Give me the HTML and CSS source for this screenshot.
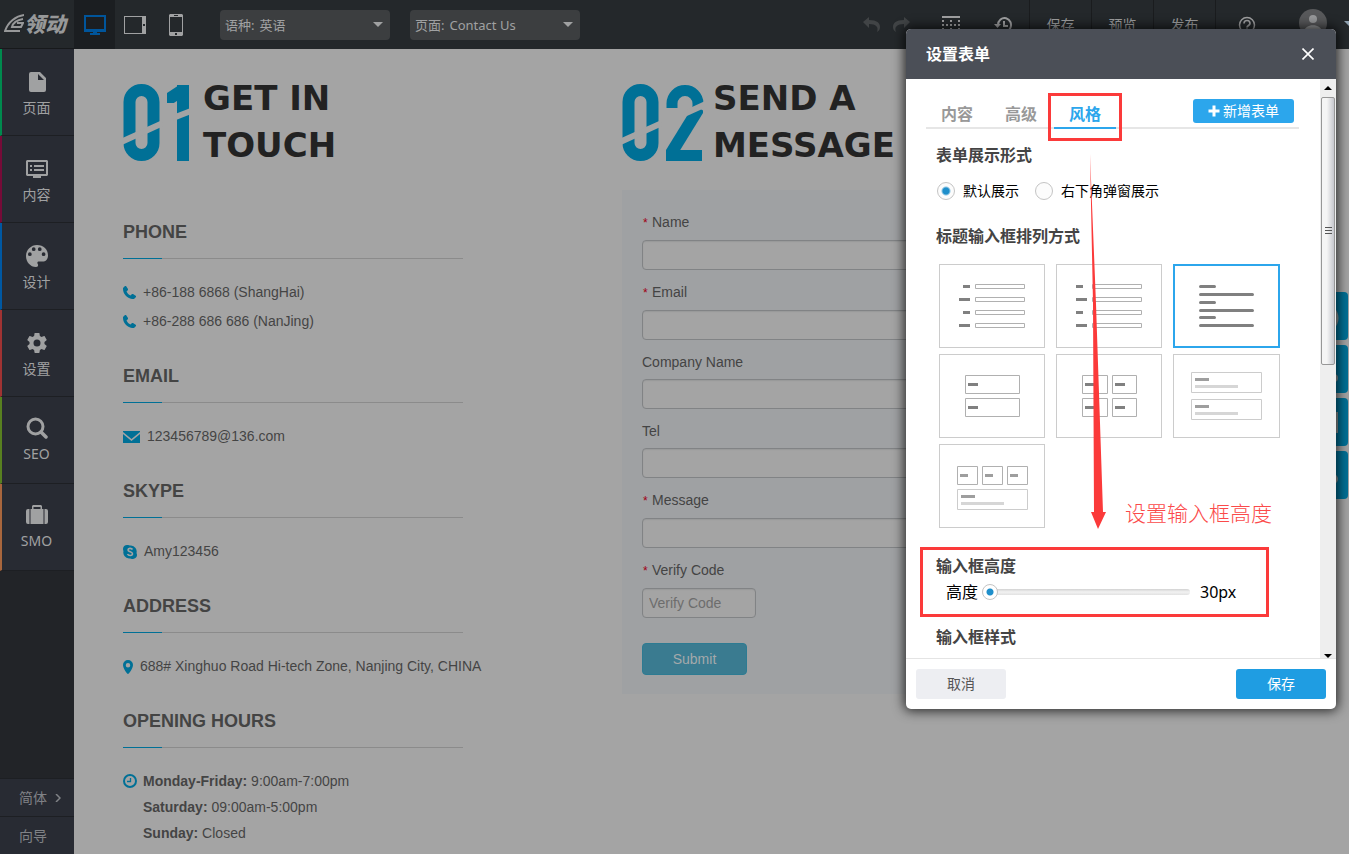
FILE: index.html
```html
<!DOCTYPE html>
<html lang="zh-CN">
<head>
<meta charset="utf-8">
<title>设置表单</title>
<link rel="stylesheet" href="styles.css">
</head>
<body>
<header class="topbar">
  <a class="logo" href="#" aria-label="领动">
    <svg width="20" height="22" viewBox="0 0 20 22"><path d="M20 3C12 4 4 10 1 19h15M19 7c-6 1-10 4-11 8h9l2-4h-6" fill="none" stroke="currentColor" stroke-width="2"/></svg>
    <span>领动</span>
  </a>
  <nav class="devices">
    <button class="device device-on" aria-label="desktop"><svg width="22" height="20" viewBox="0 0 22 20" fill="currentColor"><path fill-rule="evenodd" d="M0 0h22v17H0zM2 2v12h18V2zM9 17h4v1h3v2H6v-2h3z"/></svg></button>
    <button class="device" aria-label="tablet"><svg width="22" height="18" viewBox="0 0 22 18" fill="currentColor"><path fill-rule="evenodd" d="M0 0h22v18H0zM1 1v16h17V1zM19 8v2h2V8z"/></svg></button>
    <button class="device" aria-label="phone"><svg width="14" height="22" viewBox="0 0 14 22" fill="currentColor"><path fill-rule="evenodd" d="M1 0h12l1 1v20l-1 1H1l-1-1V1zM1 3v15h12V3zM5 1v1h4V1zM6 19v2h2v-2z"/></svg></button>
  </nav>
  <label class="picker">语种:
    <select><option>英语</option></select>
  </label>
  <label class="picker">页面:
    <select><option>Contact Us</option></select>
  </label>
  <div class="tools">
    <button class="tool tool-dim" aria-label="undo"><svg width="17" height="15" viewBox="0 0 17 15" fill="currentColor"><path d="M6 0v3c8 0 11 3 11 7 0 2-1 4-3 5 2-5-1-8-8-8v4L0 5z"/></svg></button>
    <button class="tool tool-dim" aria-label="redo"><svg width="17" height="15" viewBox="0 0 17 15" fill="currentColor"><path d="M11 0v3C3 3 0 6 0 10c0 2 1 4 3 5-2-5 1-8 8-8v4l6-6z"/></svg></button>
    <button class="tool tool-wide tool-first" aria-label="grid"><svg width="18" height="18" viewBox="0 0 18 18" stroke="currentColor" stroke-width="2" fill="none"><path d="M0 1h18"/><path stroke-dasharray="2 2" d="M0 9h18"/><path stroke-dasharray="2 6" d="M0 5h18M0 13h18"/><path stroke-dasharray="2 2" d="M0 17h18"/></svg></button>
    <button class="tool tool-wide" aria-label="history"><svg width="18" height="18" viewBox="0 0 18 18" stroke="currentColor" stroke-width="2" fill="none"><path d="M4 9a6.500 7 0 1 1 2 5M10 5v5h4"/><path d="M0 8h7l-3.500 4z" fill="currentColor" stroke="none"/></svg></button>
    <button class="tool tool-text">保存</button>
    <button class="tool tool-text">预览</button>
    <button class="tool tool-text">发布</button>
    <button class="tool tool-text" aria-label="help"><svg width="18" height="18" viewBox="0 0 18 18" stroke="currentColor" stroke-width="2" fill="none"><circle cx="9" cy="9" r="7.500" stroke-width="1.500"/><path stroke-width="1.700" d="M6 7.500c0-4 6-4 6 0 0 2-3 2-3 4M9 12.500v2"/></svg></button>
    <button class="account" aria-label="account"><svg width="28" height="28" viewBox="0 0 28 28"><circle cx="14" cy="14" r="14" fill="#58595b"/><circle cx="14" cy="10" r="4" fill="#97989a"/><path d="M5 23c0-9 18-9 18 0a14 14 0 0 1-18 0z" fill="#97989a"/></svg><svg width="10" height="5" viewBox="0 0 10 5"><path d="M0 0h10L5 5z" fill="#8fa1b0"/></svg></button>
  </div>
</header>

<div class="workspace">
  <nav class="sidebar">
    <a class="side side-green" href="#"><svg width="22" height="22" viewBox="0 0 22 22" fill="currentColor"><path fill-rule="evenodd" d="M5 1h9l6 6v12a2 2 0 0 1-2 2H5a2 2 0 0 1-2-2V3a2 2 0 0 1 2-2zm7 2v6h6z"/></svg>页面</a>
    <a class="side side-pink" href="#"><svg width="22" height="22" viewBox="0 0 22 22" fill="currentColor"><path fill-rule="evenodd" d="M1 2h20l1 1v14l-1 1h-6v2H7v-2H1l-1-1V3zM2 4v12h18V4zM4 7h2v2H4zM8 7h10v2H8zM4 11h2v2H4zM8 11h10v2H8z"/></svg>内容</a>
    <a class="side side-blue" href="#"><svg width="22" height="22" viewBox="2 2 20 20" fill="currentColor"><path d="M12 2C6.500 2 2 6.500 2 12s4 10 9 10c2 0 2-1 2-2-1-2-1-3 1-3h3c3 0 5-2 5-5.500C22 6 18 2 12 2zM5.500 12a1.700 1.700 0 1 1 0-3.400 1.700 1.700 0 0 1 0 3.400zm3.500-4.500a1.700 1.700 0 1 1 0-3.400 1.700 1.700 0 0 1 0 3.400zm5.500 0a1.700 1.700 0 1 1 0-3.400 1.700 1.700 0 0 1 0 3.400zM18 12a1.700 1.700 0 1 1 0-3.400 1.700 1.700 0 0 1 0 3.400z" fill-rule="evenodd"/></svg>设计</a>
    <a class="side side-red" href="#"><svg width="22" height="22" viewBox="1 1 22 22" fill="currentColor"><path d="M19.430 12.980c.04-.32.07-.64.07-.98s-.03-.66-.07-.98l2.110-1.650c.19-.15.24-.42.12-.64l-2-3.460c-.12-.22-.39-.3-.61-.22l-2.490 1c-.52-.4-1.080-.73-1.690-.98l-.38-2.650C14.460 2.180 14.250 2 14 2h-4c-.25 0-.46.18-.49.42l-.38 2.650c-.61.25-1.170.59-1.690.98l-2.490-1c-.23-.09-.49 0-.61.22l-2 3.460c-.13.22-.07.49.12.64l2.110 1.650c-.04.32-.07.65-.07.98s.03.66.07.98l-2.110 1.650c-.19.15-.24.42-.12.64l2 3.460c.12.22.39.3.61.22l2.490-1c.52.4 1.080.73 1.690.98l.38 2.650c.03.24.24.42.49.42h4c.25 0 .46-.18.49-.42l.38-2.650c.61-.25 1.170-.59 1.690-.98l2.490 1c.23.09.49 0 .61-.22l2-3.460c.12-.22.07-.49-.12-.64l-2.110-1.650zM12 15.500a3.500 3.500 0 1 1 0-7 3.500 3.500 0 0 1 0 7z"/></svg>设置</a>
    <a class="side side-latin side-lime" href="#"><svg width="22" height="22" viewBox="0 0 22 22" fill="none" stroke="currentColor"><circle cx="9.500" cy="9.500" r="7.500" stroke-width="3"/><path d="M15 15l5 5" stroke-width="3.500" stroke-linecap="round"/></svg>SEO</a>
    <a class="side side-latin side-orange" href="#"><svg width="22" height="22" viewBox="0 0 22 22" fill="currentColor"><path d="M2 5h1.500v15H2a2 2 0 0 1-2-2V7a2 2 0 0 1 2-2zM18.500 5H20a2 2 0 0 1 2 2v11a2 2 0 0 1-2 2h-1.500zM4.500 5H6V2l1-1h8l1 1v3h1.500v15h-13zm3-2v2h7V3z" fill-rule="evenodd"/></svg>SMO</a>
    <div class="side-foot">
      <a class="side-small" href="#">简体 <svg width="6" height="8" viewBox="0 0 6 8"><path d="M1 0l4 4-4 4" fill="none" stroke="currentColor" stroke-width="1.500"/></svg></a>
      <a class="side-small" href="#">向导</a>
    </div>
  </nav>

  <main class="page">
    <section class="contact">
      <div class="title">
        <svg class="numeral" width="67" height="77" viewBox="0 0 67 77" role="img" aria-label="01">
          <defs><clipPath id="flag"><rect x="44" y="1" width="22" height="18"/></clipPath></defs>
          <rect x="6.500" y="6" width="24" height="65" rx="12" fill="none" stroke="#007096" stroke-width="12"/>
          <rect x="54" y="1" width="12" height="76" fill="#007096"/>
          <line x1="40" y1="19" x2="64" y2="3" stroke="#007096" stroke-width="12" clip-path="url(#flag)"/>
          <line x1="-2" y1="58" x2="40" y2="39" stroke="#a4a4a4" stroke-width="6"/><line x1="50" y1="34" x2="68" y2="27" stroke="#a4a4a4" stroke-width="6"/>
        </svg>
        <h2>GET IN<br>TOUCH</h2>
      </div>
      <h3>PHONE</h3>
      <p><svg width="13" height="13" viewBox="0 0 13 13"><path d="M2 0h1l2 3v1L3.500 5.500c1 2 2 3 4 4L9 8h1l3 2v1l-2 2H9C4 12 0 8 0 3V2z"/></svg>+86-188 6868 (ShangHai)</p>
      <p><svg width="13" height="13" viewBox="0 0 13 13"><path d="M2 0h1l2 3v1L3.500 5.500c1 2 2 3 4 4L9 8h1l3 2v1l-2 2H9C4 12 0 8 0 3V2z"/></svg>+86-288 686 686 (NanJing)</p>
      <h3>EMAIL</h3>
      <p><svg width="17" height="12" viewBox="0 0 17 12"><path d="M0 0h17v1L8.500 8 0 1zM0 3l8.500 7L17 3v9H0z"/></svg>123456789@136.com</p>
      <h3>SKYPE</h3>
      <p><svg width="14" height="14" viewBox="0 0 14 14"><path d="M4 0c2 0 2 .5 4 .5A6 6 0 0 1 13.500 8C15 11 13 14 10 14c-2 0-2-.5-4-.5A6 6 0 0 1 .5 6C-1 3 1 0 4 0z"/><path d="M9.500 4.500C8.500 2.800 5 3 5 5c0 2.200 4.500 1.500 4.500 3.800 0 2.200-4 2.200-5 .2" fill="none" stroke="#a4a4a4" stroke-width="1.600"/></svg>Amy123456</p>
      <h3>ADDRESS</h3>
      <p><svg width="10" height="14" viewBox="0 0 10 14"><path fill-rule="evenodd" d="M5 0a5 5 0 0 1 5 5c0 3-4 9-5 9S0 8 0 5a5 5 0 0 1 5-5zm0 3a2 2 0 1 0 0 4.500A2 2 0 0 0 5 3z"/></svg>688# Xinghuo Road Hi-tech Zone, Nanjing City, CHINA</p>
      <h3>OPENING HOURS</h3>
      <div class="schedule">
        <p class="hours"><svg width="14" height="14" viewBox="0 0 14 14"><path d="M7 1a6 6 0 1 0 0 12A6 6 0 0 0 7 1z" fill="none" stroke="#007096" stroke-width="2"/><path d="M7.500 4v3.500H4" fill="none" stroke="#007096" stroke-width="1.300"/></svg><b>Monday-Friday:</b>&nbsp;9:00am-7:00pm</p>
        <p class="hours hours-more"><b>Saturday:</b>&nbsp;09:00am-5:00pm</p>
        <p class="hours hours-more"><b>Sunday:</b>&nbsp;Closed</p>
      </div>
    </section>

    <section class="message">
      <div class="title title-near">
        <svg class="numeral" width="82" height="77" viewBox="0 0 82 77" role="img" aria-label="02">
          <defs><clipPath id="top"><rect x="44" y="0" width="38" height="24"/></clipPath><clipPath id="low"><rect x="44" y="20" width="37" height="57"/></clipPath></defs>
          <rect x="6.500" y="6" width="24" height="65" rx="12" fill="none" stroke="#007096" stroke-width="12"/>
          <rect x="50" y="6.500" width="26" height="50" rx="13" fill="none" stroke="#007096" stroke-width="11" clip-path="url(#top)"/>
          <line x1="77" y1="24" x2="48" y2="71" stroke="#007096" stroke-width="12" clip-path="url(#low)"/>
          <rect x="44" y="66" width="36" height="11" fill="#007096"/>
          <line x1="-2" y1="58" x2="40" y2="39" stroke="#a4a4a4" stroke-width="6"/><line x1="62" y1="30" x2="86" y2="19" stroke="#a4a4a4" stroke-width="6"/>
        </svg>
        <h2>SEND A<br>MESSAGE</h2>
      </div>
      <form class="form">
        <label class="need" for="name">Name</label><input id="name" type="text">
        <label class="need" for="email">Email</label><input id="email" type="text">
        <label for="company">Company Name</label><input id="company" type="text">
        <label for="tel">Tel</label><input id="tel" type="text">
        <label class="need" for="msg">Message</label><input id="msg" type="text">
        <label class="need" for="code">Verify Code</label><input class="code" id="code" type="text" placeholder="Verify Code">
        <button class="submit" type="button">Submit</button>
      </form>
    </section>
  </main>
</div>

<aside class="floats">
  <a href="#" aria-label="chat"><svg width="48" height="48"><circle cx="24" cy="26" r="13" fill="none" stroke="#8c9496" stroke-width="3"/></svg></a>
  <a href="#" aria-label="phone"><svg width="48" height="48"><circle cx="34" cy="33" r="4" fill="#8c9496"/></svg></a>
  <a href="#" aria-label="mail"><svg width="48" height="48"><rect x="11" y="15" width="26" height="19" fill="none" stroke="#8c9496" stroke-width="2"/></svg></a>
  <a href="#" aria-label="skype"><svg width="48" height="48"><circle cx="33" cy="28" r="5" fill="#8c9496"/></svg></a>
</aside>

<div class="dialog" role="dialog" aria-labelledby="dialog-title">
  <div class="dialog-head">
    <h1 id="dialog-title">设置表单</h1>
    <button class="close" aria-label="关闭"><svg width="12" height="12" viewBox="0 0 12 12"><path d="M.5.5l11 11M11.500.5l-11 11" stroke="#fff" stroke-width="1.600"/></svg></button>
  </div>
  <div class="dialog-body">
    <div class="settings">
      <div class="tabs">
        <button class="tab">内容</button>
        <button class="tab">高级</button>
        <button class="tab tab-on">风格</button>
        <button class="add"><svg width="12" height="12" viewBox="0 0 12 12"><path d="M6 .5v11M.5 6h11" stroke="#fff" stroke-width="3"/></svg>新增表单</button>
      </div>
      <h4 class="h-display">表单展示形式</h4>
      <div class="radios">
        <label><input type="radio" name="display" checked>默认展示</label>
        <label><input type="radio" name="display">右下角弹窗展示</label>
      </div>
      <h4 class="h-layout">标题输入框排列方式</h4>
      <div class="layouts">
        <button class="layout" aria-label="右对齐标题"><svg width="104" height="82" viewBox="1 1 104 82"><path class="bar3" d="M24 22.500h7M20 35.500h11M24 48.500h7M20 61.500h11"/><path class="box" d="M36.500 20.500h49v4h-49zM36.500 33.500h49v4h-49zM36.500 46.500h49v4h-49zM36.500 59.500h49v4h-49z"/></svg></button>
        <button class="layout" aria-label="左对齐标题"><svg width="104" height="82" viewBox="1 1 104 82"><path class="bar3" d="M20 22.500h7M20 35.500h11M20 48.500h7M20 61.500h11"/><path class="box" d="M36.500 20.500h49v4h-49zM36.500 33.500h49v4h-49zM36.500 46.500h49v4h-49zM36.500 59.500h49v4h-49z"/></svg></button>
        <button class="layout layout-on" aria-label="标题在上"><svg width="103" height="80" viewBox="2 2 103 80"><path class="bar3" stroke-linecap="round" d="M27.500 22.500h14M27.500 30.500h52M27.500 38.500h14M27.500 46.500h52M27.500 53.500h14M27.500 61.500h52"/></svg></button>
        <button class="layout" aria-label="标题在内"><svg width="104" height="82" viewBox="1 1 104 82"><path class="box" d="M26.500 21.500h54v18h-54zM26.500 44.500h54v18h-54z"/><path class="bar3" d="M29 30.500h10M29 53.500h10"/></svg></button>
        <button class="layout" aria-label="两列"><svg width="104" height="82" viewBox="1 1 104 82"><path class="box" d="M26.500 21.500h25v18h-25zM56.500 21.500h24v18h-24zM26.500 44.500h25v18h-25zM56.500 44.500h24v18h-24z"/><path class="bar3" d="M29 30.500h10M59 30.500h10M29 53.500h10M59 53.500h10"/></svg></button>
        <button class="layout" aria-label="标题与说明"><svg width="104" height="82" viewBox="1 1 104 82"><path class="box box-light" d="M18.500 18.500h70v20h-70zM18.500 45.500h70v20h-70z"/><path class="bar3 bar-mid" d="M22 25.500h14M22 52.500h14"/><path class="bar3 bar-light" d="M22 32.500h43M22 59.500h43"/></svg></button>
        <button class="layout" aria-label="三列"><svg width="104" height="82" viewBox="1 1 104 82"><path class="box" d="M18.500 22.500h20v18h-20zM43.500 22.500h20v18h-20zM68.500 22.500h20v18h-20z"/><path class="box box-light" d="M18.500 45.500h70v20h-70z"/><path class="bar3 bar-mid" d="M21 31.500h8M46 31.500h8M71 31.500h8M22 52.500h14"/><path class="bar3 bar-light" d="M22 59.500h43"/></svg></button>
      </div>
      <h4 class="h-height">输入框高度</h4>
      <div class="slider">
        <label for="height">高度</label>
        <input id="height" type="range" min="30" max="100" value="30">
        <output for="height">30px</output>
      </div>
      <h4 class="h-style">输入框样式</h4>
    </div>
    <div class="scroll">
      <svg width="8" height="4" viewBox="0 0 8 4"><path d="M0 4l4-4 4 4z"/></svg>
      <div class="scroll-thumb"><i></i></div>
      <svg width="8" height="4" viewBox="0 0 8 4"><path d="M0 0h8L4 4z"/></svg>
    </div>
  </div>
  <div class="dialog-foot">
    <button class="cancel">取消</button>
    <button class="save">保存</button>
  </div>
  <div class="mark mark-tab"></div>
  <div class="mark mark-height"></div>
  <svg class="arrow" width="18" height="375" viewBox="0 0 18 375"><path d="M1 0l6 150 7 208h3l-8 17-7-17h3L4 150z" fill="#fb3a3a"/></svg>
  <div class="note">设置输入框高度</div>
</div>
</body>
</html>
```

FILE: styles.css
```css
* { box-sizing: border-box; margin: 0; padding: 0; }
body { height: 100vh; overflow: hidden; position: relative; display: flex; flex-direction: column; background: #a4a4a4; font: 14px/20px "Noto Sans", "Noto Sans CJK SC", sans-serif; }
button, input, select { font: inherit; color: inherit; border: 0; background: none; }
a { color: inherit; text-decoration: none; }
svg { display: block; flex: none; }

.topbar { flex: none; display: flex; align-items: center; height: 49px; background: #24282b; color: #a0a1a2; overflow: hidden; }
.logo { display: flex; align-items: center; width: 74px; height: 49px; padding: 0 6px 2px 4px; border-bottom: 1px solid #17191b; color: #979899; font: italic 900 21px/32px "Noto Sans CJK SC", sans-serif; }
.devices { display: flex; width: 146px; }
.device { display: grid; place-items: center; width: 41px; height: 49px; padding-right: 1px; }
.device-on { padding-right: 0; background: #1b1e21; color: #00559b; }
.picker { display: flex; align-items: center; width: 170px; height: 30px; margin-right: 20px; padding: 0 7px 0 5px; border-radius: 4px; background: #3c3e40; font-size: 13px; }
.picker select { flex: 1; height: 30px; margin-left: 5px; appearance: none; outline: 0; }
.picker::after { content: ""; border: 5px solid transparent; border-top-color: #a0a1a2; border-bottom: 0; }
.tools { display: flex; flex: none; width: 493px; margin-left: auto; }
.tool { display: grid; place-items: center; flex: none; width: 30px; height: 49px; }
.tool-dim { color: #414446; }
.tool-wide { width: 52px; }
.tool-first { margin-left: 9px; }
.tool-text { width: 62px; border-left: 1px solid #1a1c1e; }
.account { display: flex; align-items: center; gap: 17px; padding-left: 22px; height: 46px; }

.workspace { flex: 1; min-height: 0; display: flex; }
.sidebar { flex: none; display: flex; flex-direction: column; width: 74px; background: #222428; color: #a0a1a2; }
.side { display: flex; flex-direction: column; align-items: center; gap: 5px; height: 87px; padding: 22px 3px 0 0; border-left: 2px solid #008a4e; border-bottom: 1px solid #1d1f23; background: #282b33; font-size: 14px; line-height: 20px; }
.side-latin { padding-top: 20px; }
.side-pink { border-left-color: #760b38; }
.side-blue { border-left-color: #0058a2; }
.side-red { border-left-color: #a03333; }
.side-lime { border-left-color: #588020; }
.side-orange { border-left-color: #a8663d; }
.side-foot { margin-top: auto; color: #808286; }
.side-small { display: flex; align-items: center; gap: 8px; height: 38px; padding-left: 19px; background: #282b33; border-top: 1px solid #1d1f23; }

.page { flex: 1; display: grid; grid-template-columns: 499px 640px; align-content: start; padding: 26px 0 0 49px; overflow: hidden; font-family: "Liberation Sans", sans-serif; color: #444; }
.title { display: flex; gap: 13px; height: 94px; }
.title-near { gap: 9px; }
.numeral { margin-top: 9px; }
h2 { font: bold 34px/47px "DejaVu Sans", sans-serif; color: #222; }
.contact { min-width: 0; }
.contact .title { margin-bottom: 53px; }
h3 { width: 340px; height: 37px; margin: 30px 0 19px; font-size: 18px; line-height: 20px; border-bottom: 1px solid; border-image: linear-gradient(90deg, #007096 40px, #8b8b8b 40px) 1; }
.contact p { display: flex; align-items: center; gap: 7px; line-height: 29px; fill: #007096; white-space: nowrap; }
.schedule { padding-top: 1px; }
.contact .hours { gap: 0; line-height: 26px; }
.hours svg { margin-right: 6px; }
.contact .hours-more { padding-left: 20px; }
.form { display: flex; flex-direction: column; align-items: stretch; margin-top: 21px; padding: 22px 20px 19px; background: #9fa1a3; }
.form label { margin-bottom: 7px; }
.form .need { margin-bottom: 8px; }
.need::before { content: "*"; display: inline-block; width: 9px; padding-left: 1px; color: #a00014; font-size: 12px; line-height: 12px; }
.form input { height: 30px; margin-bottom: 12px; padding: 0 6px; border: 1px solid #818385; border-radius: 4px; background: #a4a4a4; box-shadow: inset 0 1px 1px #98999a; }
.form .code { width: 114px; }
.form input::placeholder { color: #6d6d6d; }
.submit { width: 105px; height: 32px; margin-top: 13px; border: 1px solid #2d7b92; border-radius: 4px; background: #3a7b90; color: #a4a9ab; }

.floats { position: absolute; top: 292px; right: 1px; display: flex; flex-direction: column; gap: 5px; }
.floats a { width: 48px; height: 48px; border-radius: 4px; background: #007096; }

.dialog { position: absolute; top: 29px; right: 13px; width: 430px; display: flex; flex-direction: column; border-radius: 5px; background: #fff; color: #000; box-shadow: 0 0 12px 2px rgba(0,0,0,.75); }
.dialog-head { display: flex; align-items: center; justify-content: space-between; height: 50px; padding: 0 20px; border-radius: 5px 5px 0 0; background: #4b4f57; }
h1 { color: #fff; font-size: 16px; line-height: 20px; }
.close { width: 16px; height: 16px; display: grid; place-items: center; }
.dialog-body { display: flex; height: 579px; overflow: hidden; }
.settings { flex: 1; padding: 20px 21px 0 30px; }
.tabs { display: flex; gap: 2px; height: 30px; margin-left: -10px; border-bottom: 2px solid #e6e6e6; }
.tab { height: 30px; padding: 0 15px; color: #999; font-size: 16px; font-weight: bold; }
.tab-on { color: #2ca6ec; border-bottom: 2px solid; padding-top: 2px; }
.add { display: flex; align-items: center; justify-content: center; gap: 3px; width: 101px; height: 24px; margin: 0 5px 0 auto; border-radius: 3px; background: #2ca6ec; color: #fff; }
h4 { font-size: 16px; line-height: 20px; color: #444; }
.h-display { margin: 16px 0; }
.radios { display: flex; gap: 15px; }
.radios label { display: flex; align-items: center; gap: 8px; }
.radios input { appearance: none; width: 18px; height: 18px; border: 1px solid #c4c4c4; border-radius: 50%; background: #fcfcfc; margin-left: 1px; }
.radios input:checked { background: radial-gradient(circle, #1f8fcb 0 3px, #fcfcfc 5px); }
.h-layout { margin: 25px 0 18px; }
.layouts { display: grid; grid-template-columns: 106px 106px 107px; gap: 6px 11px; margin-left: 3px; }
.layout { height: 84px; border: 1px solid #ccc; }
.layout-on { border: 2px solid #2ca6ec; }
.bar3 { fill: none; stroke: #808080; stroke-width: 3; }
.bar-mid { stroke: #9e9e9e; }
.bar-light { stroke: #d6d6d6; }
.box { fill: none; stroke: #b0b0b0; }
.box-light { stroke: #ccc; }
.h-height { margin: 28px 0 6px; }
.slider { display: flex; align-items: center; height: 20px; padding-left: 10px; font-size: 16px; }
.slider input { appearance: none; width: 208px; height: 6px; margin: 0 10px 0 4px; border-radius: 3px; background: linear-gradient(#d2d2d2, #f2f2f2 50%, #e2e2e2); }
.slider input::-webkit-slider-thumb { appearance: none; width: 16px; height: 16px; border: 1px solid #c4c4c4; border-radius: 50%; background: radial-gradient(circle, #1f8fcb 0 3px, #fff 4px); }
.h-style { margin-top: 25px; }
.scroll { flex: none; display: flex; flex-direction: column; align-items: center; width: 16px; padding-top: 7px; background: #eee; }
.scroll-thumb { display: grid; place-items: center; width: 14px; height: 268px; margin: 7px 0 auto; border: 1px solid #979797; border-radius: 2px; background: linear-gradient(90deg, #f5f5f5 40%, #c6c7cd); }
.scroll-thumb i { width: 7px; height: 8px; background: repeating-linear-gradient(#555 0 1px, transparent 1px 3px); }
.dialog-foot { display: flex; justify-content: space-between; padding: 10px; border-top: 1px solid #e4e4e4; }
.dialog-foot button { width: 90px; height: 30px; border-radius: 3px; }
.cancel { background: #edeef2; color: #555; }
.dialog-foot .save { background: #1f9de2; color: #fff; }
.mark { position: absolute; border: 3px solid #fb3a3a; pointer-events: none; }
.mark-tab { left: 142px; top: 64px; width: 74px; height: 48px; }
.mark-height { left: 14px; top: 518px; width: 349px; height: 70px; }
.arrow { position: absolute; left: 183px; top: 125px; pointer-events: none; }
.note { position: absolute; left: 219px; top: 468px; color: #fb4a4a; font: 300 21px/30px "Noto Sans CJK SC", sans-serif; }
```
